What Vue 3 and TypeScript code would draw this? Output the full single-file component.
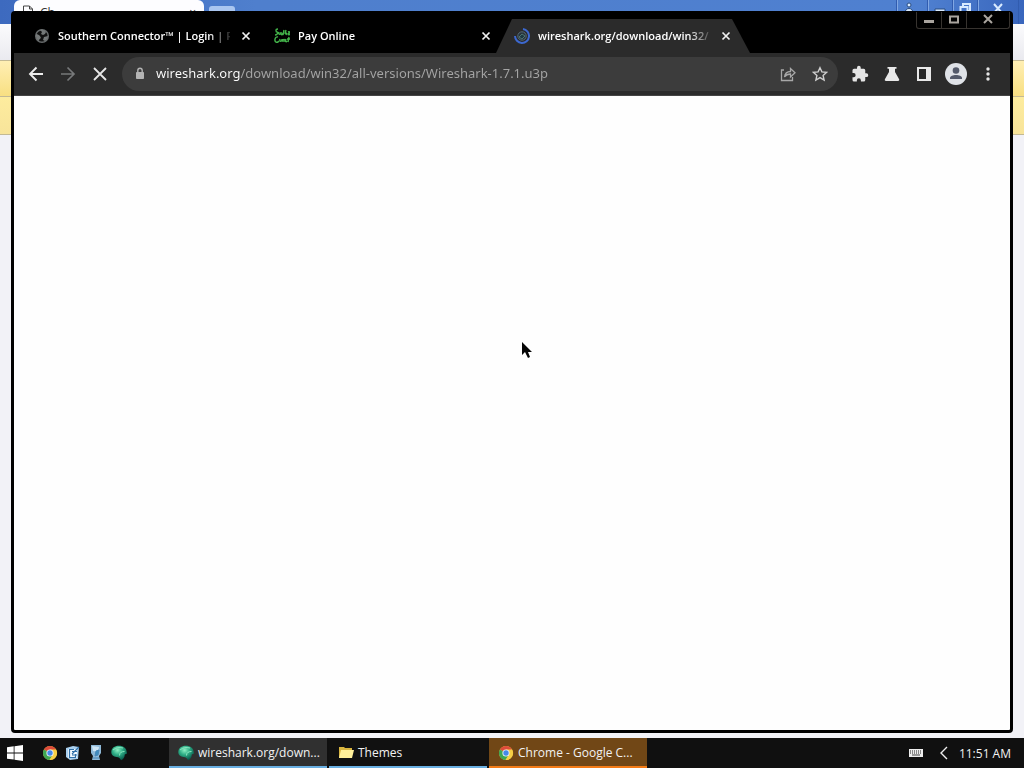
<script setup lang="ts">
import { ref } from 'vue'

interface Tab {
  title: string
  icon: 'globe' | 'connector' | 'loading'
}

const tabs: Tab[] = [
  { title: 'Southern Connector™ | Login | R', icon: 'globe' },
  { title: 'Pay Online', icon: 'connector' },
  { title: 'wireshark.org/download/win32/', icon: 'loading' },
]
const active = ref(2)
const address = ref('wireshark.org/download/win32/all-versions/Wireshark-1.7.1.u3p')
</script>

<template>
  <div class="desktop">
    <svg class="defs" width="0" height="0" aria-hidden="true">
      <defs>
        <radialGradient id="teal" cx="40%" cy="30%" r="70%">
          <stop offset="0" stop-color="#8df0c4" />
          <stop offset="0.45" stop-color="#2fae86" />
          <stop offset="1" stop-color="#07584b" />
        </radialGradient>
        <symbol id="chrome" viewBox="0 0 16 16">
          <circle cx="8" cy="8" r="7" fill="#f3c93b" />
          <path d="M8 8 1.9 4.5A7 7 0 0 1 14.1 4.5z" fill="#dd4b3a" />
          <path d="M8 8 1.9 4.5A7 7 0 0 0 7.5 15L11 9.5z" fill="#3fa653" />
          <path d="M8 4.5h6.1A7 7 0 0 1 7.5 15L11 9.8z" fill="#f6cf45" />
          <circle cx="8" cy="8" r="3.6" fill="#eef2f6" />
          <circle cx="8" cy="8" r="2.7" fill="#4589e8" />
        </symbol>
        <symbol id="tealball" viewBox="0 0 16 16">
          <path d="M.3 7C.5 3 3.500.8 8 .8c4 0 7 2.200 7.500 5.200L16 8.500l-2.200 1c0 3-1.800 5-3.800 5.800-.8-2-2-3-4.500-3.300C2.500 11.800.2 10 .3 7z" fill="url(#teal)" />
          <path d="M2 5c3-2.500 6-3 10-2M8.500 10.500c0-3 2-4 5-4" fill="none" stroke="#8ce6c0" stroke-width="1" />
        </symbol>
      </defs>
    </svg>

    <main class="workspace">
      <div class="back-window" aria-hidden="true">
        <div class="back-title">
          <div class="back-tab">
            <svg width="12" height="14" viewBox="0 0 12 14"><path d="M1.500 13V1h6l3 3v9M7.500 1v3h3" fill="none" stroke="#444" /></svg>
            <span>Ch</span>
            <span class="back-x">×</span>
          </div>
          <div class="back-new"></div>
          <div class="back-caption">
            <span><svg width="12" height="14" viewBox="0 0 12 14"><circle cx="6" cy="5" r="2" /><path d="M2 13c0-6 8-6 8 0z" /></svg></span>
            <span class="gap"><svg width="12" height="14" viewBox="0 0 12 14"><path d="M1 9h10v3H1z" /></svg></span>
            <span><svg width="12" height="14" viewBox="0 0 12 14"><path d="M4 6V4h7v7H9M1.500 7h7v7h-7z" class="hollow" /></svg></span>
            <span class="wide"><svg width="12" height="14" viewBox="0 0 12 14"><path d="m2 4 8 9m0-9-8 9" class="hollow" /></svg></span>
          </div>
        </div>
        <div class="band pale"></div>
        <div class="band yellow"></div>
        <div class="band yellow low"></div>
      </div>

      <section class="browser">
        <header class="tabstrip">
          <div v-for="(tab, i) in tabs" :key="tab.title" class="tab" :class="{ active: i === active }">
            <button class="tab-main" type="button" @click="active = i">
              <svg v-if="tab.icon === 'globe'" width="16" height="16" viewBox="0 0 16 16">
                <circle cx="8" cy="8" r="6.300" fill="#111" stroke="#666a6b" stroke-width="1.500" />
                <path d="M2 6c2 0 3 1 4 2l1 2c-1 1-2 1-2 3-2-1-3-3-3-5zM6 2c2-1 5 0 6 2l-1 2-2 1-2-1 1-2zM10 9l4-1c0 2-1 4-3 5l-2-1z" fill="#747878" />
              </svg>
              <svg v-else-if="tab.icon === 'connector'" width="16" height="16" viewBox="0 0 16 16">
                <path d="M4 1C1 1 2 4 3 4s1 3-2 3M5 4c-1 3 2 3 2 0 0 3 1 4 2 1m1-3-1 5m3-5-1 4c1-2 2-1 1 1m2-3c2-1 2 1 0 2 0 1 1 1 2 0M4 9c-3-1-4 4-2 5 1 1 2 0 3-1m1-2c-1 3 2 3 2 0m1 0v3c0-3 2-4 2 0m1-3c-1 2 0 4 1 2m2-4-1 5m-1-3h3" fill="none" stroke="#43b34a" stroke-width="1.400" />
              </svg>
              <svg v-else width="16" height="16" viewBox="0 0 16 16">
                <path d="M9 1a7 7 0 1 1-8 7" fill="none" stroke="#3c68cf" stroke-width="2" />
                <circle cx="8" cy="8" r="4.200" fill="#27323c" stroke="#546b76" />
                <path d="m5 9 3-3 3 2-3 3z" fill="#1e3841" stroke="#4c7470" />
              </svg>
              <span class="tab-title">{{ tab.title }}</span>
            </button>
            <button class="tab-close" type="button" :aria-label="`Close ${tab.title}`">
              <svg width="16" height="16" viewBox="0 0 16 16"><path d="m4.500 4.500 7 7m0-7-7 7" stroke="#f1f1f1" stroke-width="1.700" /></svg>
            </button>
          </div>
          <div class="caption">
            <button type="button" aria-label="Minimize"><svg width="12" height="12" viewBox="0 0 12 12"><path d="M1 7.500h10" stroke="#aaa59f" stroke-width="3" /></svg></button>
            <button type="button" aria-label="Maximize"><svg width="12" height="12" viewBox="0 0 12 12"><path d="M2 2.500h8v6H2z" fill="none" stroke="#aaa59f" stroke-width="2" /></svg></button>
            <button type="button" class="wide" aria-label="Close window"><svg width="12" height="12" viewBox="0 0 12 12"><path d="m2 1 8 8m0-8-8 8" stroke="#aaa59f" stroke-width="2" /></svg></button>
          </div>
        </header>

        <nav class="toolbar">
          <div class="history">
            <button type="button" aria-label="Back"><svg width="16" height="16" viewBox="0 0 16 16"><path d="M15 8H2m6.500-6.500L2 8l6.500 6.500" fill="none" stroke="#ededed" stroke-width="1.900" /></svg></button>
            <button type="button" aria-label="Forward" disabled><svg width="16" height="16" viewBox="0 0 16 16"><path d="M1 8h13M7.500 1.500 14 8l-6.500 6.500" fill="none" stroke="#77797a" stroke-width="1.700" /></svg></button>
            <button type="button" aria-label="Stop"><svg width="16" height="16" viewBox="0 0 16 16"><path d="m2 2 12 12m0-12L2 14" stroke="#e6e6e6" stroke-width="1.800" /></svg></button>
          </div>
          <div class="omnibox">
            <svg width="16" height="16" viewBox="0 0 16 16"><path d="M4.500 6.500h7v6h-7z" fill="#b3b3b3" stroke="#b3b3b3" stroke-linejoin="round" /><path d="M5.800 6V4.500a2.200 2.200 0 0 1 4.400 0V6" fill="none" stroke="#b3b3b3" stroke-width="1.400" /></svg>
            <input v-model="address" type="text" aria-label="Address" spellcheck="false" />
            <button type="button" aria-label="Share"><svg width="16" height="16" viewBox="0 0 16 16"><path d="M4 4H1.500v10.500h11V11M4.500 11c.5-4 3-5.500 6-5.500V2.500l4.500 4.200-4.500 4.200V8c-2.500 0-4.500.8-6 3z" fill="none" stroke="#a8a8a8" stroke-width="1.300" /></svg></button>
            <button type="button" aria-label="Bookmark"><svg width="16" height="16" viewBox="0 0 16 16"><path d="m8 1.700 1.900 4.200 4.600.5-3.400 3 1 4.600L8 11.600 3.900 14l1-4.600-3.400-3 4.600-.5z" fill="none" stroke="#cfcfcf" stroke-width="1.400" /></svg></button>
          </div>
          <div class="actions">
            <button type="button" aria-label="Extensions"><svg width="18" height="18" viewBox="0 0 24 24"><path d="M20.500 11H19V7a2 2 0 0 0-2-2h-4V3.500a2.500 2.500 0 0 0-5 0V5H4a2 2 0 0 0-2 2v3.800h1.500a2.700 2.700 0 0 1 0 5.400H2V20a2 2 0 0 0 2 2h3.800v-1.500a2.700 2.700 0 0 1 5.400 0V22H17a2 2 0 0 0 2-2v-4h1.500a2.500 2.500 0 0 0 0-5z" fill="#e5e5e5" /></svg></button>
            <button type="button" aria-label="Experiments"><svg width="16" height="16" viewBox="0 0 16 16"><path d="M3.500 1h9v1.800H11V6l4 7c.6 1.200 0 2-1 2H2c-1 0-1.600-.8-1-2l4-7V2.800H3.500z" fill="#e8e8e8" /></svg></button>
            <button type="button" aria-label="Side panel"><svg width="16" height="16" viewBox="0 0 16 16"><path d="M2 2h12v12H2z" fill="#272727" stroke="#e8e8e8" stroke-width="2" /><path d="M10 2h4v12h-4z" fill="#e8e8e8" /></svg></button>
            <button type="button" aria-label="Profile"><svg width="22" height="22" viewBox="0 0 22 22"><circle cx="11" cy="11" r="11" fill="#dfe2e7" /><circle cx="11" cy="7.500" r="3.300" fill="#545a6b" /><path d="M5 16v-1c0-4 12-4 12 0v1z" fill="#545a6b" /></svg></button>
            <button type="button" aria-label="Menu"><svg width="16" height="16" viewBox="0 0 16 16" fill="#e5e5e5"><circle cx="8" cy="3" r="1.700" /><circle cx="8" cy="8" r="1.700" /><circle cx="8" cy="13" r="1.700" /></svg></button>
          </div>
        </nav>
        <div class="page"></div>
      </section>

      <svg class="cursor" width="12" height="18" viewBox="0 0 12 18" aria-hidden="true"><path d="M0 0v13l3-3 3 6 2-1-2-5h4z" fill="#050505" /></svg>
    </main>

    <footer class="taskbar">
      <button class="start" type="button" aria-label="Start"><svg width="16" height="16" viewBox="0 0 16 16" fill="#fff"><path d="M0 2.300 6.700 1.300v6.200H0zM7.500 1.200 16 0v7.500H7.500zM0 8.400h6.700v6.200L0 13.700zM7.500 8.400H16V16l-8.500-1.200z" /></svg></button>
      <div class="quick">
        <button type="button" aria-label="Chrome"><svg width="16" height="16"><use href="#chrome" /></svg></button>
        <button type="button" aria-label="Desktop settings"><svg width="16" height="16" viewBox="0 0 16 16"><path d="M1 3 8 1l6 1-1 12-8 1-4-3z" fill="#a9d0ef" /><path d="M3 4h9v9H3z" fill="#f3faff" /><path d="M9 4.500H4.500v8h6V9M7 9l7-7M7 6.500h5M7 10h5" fill="none" stroke="#2f6fa8" stroke-width="1.200" /></svg></button>
        <button type="button" aria-label="Recycle bin"><svg width="16" height="16" viewBox="0 0 16 16"><path d="M3 0h10v8l-2 3 1 4H4l1-4-2-3z" fill="#8fb9d8" /><path d="m4 1 7 1-1 5-5-1z" fill="#cfe6f6" /><path d="m8 6 3-1-1 5-3 1zM5 13h6" fill="#3f8dbe" stroke="#4786b8" /></svg></button>
        <button type="button" aria-label="Browser"><svg width="16" height="16"><use href="#tealball" /></svg></button>
      </div>
      <div class="tasks">
        <button class="task current" type="button"><svg width="16" height="16"><use href="#tealball" /></svg><span>wireshark.org/down...</span></button>
        <button class="task" type="button"><svg width="16" height="16" viewBox="0 0 16 16"><path d="M1 2h5l1 1h7v10H1z" fill="#d9b53f" /><path d="M3 5h13l-2 8H1z" fill="#fff09a" /></svg><span>Themes</span></button>
        <button class="task alert" type="button"><svg width="16" height="16"><use href="#chrome" /></svg><span>Chrome - Google C...</span></button>
      </div>
      <div class="tray">
        <svg width="14" height="8" viewBox="0 0 14 8"><path d="M0 0h14v8H0z" fill="#eee" /><path d="M1 2h12M1 4h12" stroke="#222" stroke-dasharray="1 1" /><path d="M3 6h8" stroke="#444" /></svg>
        <button type="button" aria-label="Show hidden icons"><svg width="10" height="14" viewBox="0 0 10 14"><path d="M8 1 2 7l6 6" fill="none" stroke="#eee" stroke-width="1.400" /></svg></button>
        <time>11:51 AM</time>
      </div>
    </footer>
  </div>
</template>

<style>
body { margin: 0; }
</style>

<style scoped>
* { box-sizing: border-box; }
.desktop {
  display: flex;
  flex-direction: column;
  height: 100vh;
  overflow: hidden;
  background: #f2f2f7;
  font-family: "Open Sans", "Noto Sans", sans-serif;
  font-size: 12px;
}
.defs { position: absolute; }
button {
  display: flex;
  align-items: center;
  justify-content: center;
  padding: 0;
  border: 0;
  background: none;
  color: inherit;
  font: inherit;
}
svg { display: block; flex: none; }

.workspace { position: relative; display: flex; flex: 1; min-height: 0; }
.back-window { position: absolute; inset: 0; }
.back-title {
  display: flex;
  height: 24px;
  padding-left: 14px;
  background: linear-gradient(90deg, #3d6abf, #4f7fcd 25%, #4f80d0 90%, #3966bd);
}
.back-tab {
  display: flex;
  gap: 6px;
  width: 190px;
  height: 23px;
  padding: 5px 8px;
  border-radius: 6px 6px 0 0;
  background: #fdfdff;
  color: #333;
  line-height: 16px;
}
.back-x { margin-left: auto; }
.back-new { width: 26px; height: 14px; margin: 6px 5px; border-radius: 3px; background: #aac6f0; }
.back-caption { display: flex; margin-left: auto; padding-right: 5px; }
.back-caption span { display: flex; justify-content: center; width: 25px; border-left: 1px solid #315caf; box-shadow: inset 1px 0 #82a8e3; }
.back-caption .gap { margin-left: 6px; }
.back-caption .wide { width: 42px; border-right: 1px solid #315caf; }
.back-caption svg { fill: #d9ebff; stroke: #294c80; }
.back-caption .hollow { fill: none; stroke: #d9ebff; stroke-width: 2; }
.band { height: 37px; border-bottom: 1px solid #c3b994; }
.band.pale { background: linear-gradient(#fbfbfd, #eaeaef); }
.band.yellow { height: 36px; background: linear-gradient(#ffefb4, #f8df82); }
.band.yellow.low { height: 38px; background: linear-gradient(#fdec9e, #f8e49a); }

.browser {
  position: relative;
  display: flex;
  flex: 1;
  flex-direction: column;
  min-width: 0;
  margin: 11px 11px 5px;
  border: 3px solid #000;
  border-top-width: 1px;
  border-radius: 4px;
  background: #000;
}
.tabstrip { position: relative; display: flex; gap: 20px; height: 41px; padding-left: 20px; }
.tab { position: relative; display: flex; align-items: center; gap: 8px; width: 220px; padding-top: 6px; color: #fff; }
.tab.active::before {
  content: "";
  position: absolute;
  inset: 7px -16px 0 -18px;
  background: #2b2b2b;
  clip-path: polygon(0 100%, 16px 0, 236px 0, 100% 100%);
}
.tab-main { position: relative; flex: 1; gap: 8px; min-width: 0; }
.tab-title {
  flex: 1;
  overflow: hidden;
  font-size: 11px;
  font-weight: 600;
  line-height: 18px;
  text-align: left;
  white-space: nowrap;
  mask-image: linear-gradient(90deg, #000 150px, transparent 176px);
}
.tab-close { position: relative; }
.caption {
  position: absolute;
  top: 0;
  right: 0;
  display: flex;
  height: 17px;
  border: 1px solid #37332f;
  border-top: 0;
  border-radius: 0 0 3px 3px;
}
.caption button { width: 25px; border-right: 1px solid #37332f; }
.caption .wide { width: 42px; border-right: 0; }

.toolbar {
  display: flex;
  align-items: center;
  gap: 14px;
  height: 43px;
  padding: 0 6px 0 14px;
  border-bottom: 1px solid #444;
  background: #2b2b2b;
}
.history { display: flex; gap: 16px; }
.omnibox {
  display: flex;
  flex: 1;
  align-items: center;
  gap: 16px;
  height: 34px;
  padding: 0 10px;
  border-radius: 17px;
  background: #3c3c3c;
}
.omnibox input {
  flex: 1;
  min-width: 0;
  margin-left: -8px;
  padding: 0 0 2px;
  border: 0;
  outline: 0;
  background: linear-gradient(90deg, #fff 84px, #a5a5a5 84px);
  background-clip: text;
  color: transparent;
  font-family: "Noto Sans", "Open Sans", sans-serif;
  font-size: 13px;
  line-height: 20px;
}
.actions { display: flex; margin-left: -8px; }
.actions button { width: 32px; height: 32px; }
.page { flex: 1; background: #fefefe; border-radius: 0 0 1px 1px; }
.cursor { position: absolute; top: 342px; left: 522px; }

.taskbar { display: flex; height: 30px; background: #101010; color: #f2f2f2; }
.start { width: 30px; }
.quick { display: flex; gap: 7px; margin-left: 12px; }
.tasks { display: flex; gap: 2px; margin-left: 42px; }
.task {
  justify-content: flex-start;
  gap: 4px;
  width: 158px;
  padding: 2px 0 0 9px;
  border-bottom: 2px solid #69afe2;
  background: #111;
  line-height: 18px;
  white-space: nowrap;
}
.task.current { background: #303030; }
.task.alert { border-bottom-color: #f47b16; background: #714716; }
.tray { display: flex; align-items: center; gap: 16px; margin-left: auto; padding-right: 13px; }
.tray time { margin-left: -6px; }
</style>
